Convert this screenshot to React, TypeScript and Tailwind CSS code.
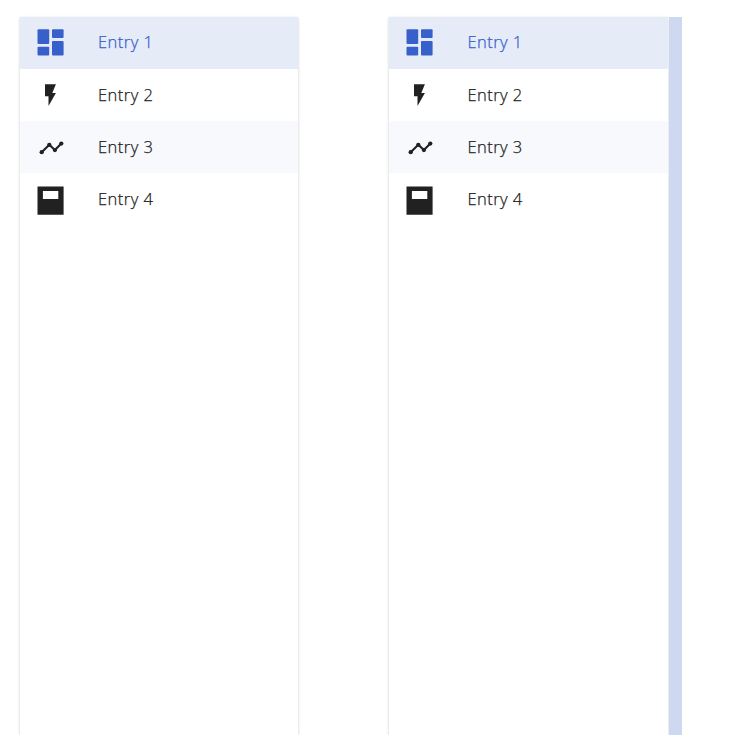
import React from "react";

type Entry = { label: string; icon: React.ReactNode; row: string; text: string };

const entries: Entry[] = [
  {
    label: "Entry 1",
    row: "bg-[#e5ebf7] text-[#3860cb]",
    text: "pb-[2px]",
    icon: (
      <>
        <rect x="17.5" y="12.2" width="11.7" height="14.7" rx="1" />
        <rect x="32" y="12.2" width="11.6" height="8.8" rx="1" />
        <rect x="17.5" y="29.8" width="11.7" height="8.8" rx="1" />
        <rect x="32" y="23.9" width="11.6" height="14.7" rx="1" />
      </>
    ),
  },
  {
    label: "Entry 2",
    row: "text-[#212121]",
    text: "pb-0",
    icon: <path d="M25 15.2H35.9L32.3 24H35.9L28.5 37V27.3H25Z" />,
  },
  {
    label: "Entry 3",
    row: "bg-[#f8f9fd] text-[#212121]",
    text: "pb-0",
    icon: (
      <>
        <path d="M21.7 31.2L29.3 23.8L34.9 29.1L41.3 22.6" fill="none" stroke="currentColor" strokeWidth="2.1" />
        <circle cx="21.7" cy="31.2" r="2.15" />
        <circle cx="29.3" cy="23.8" r="2.15" />
        <circle cx="34.9" cy="29.1" r="2.15" />
        <circle cx="41.3" cy="22.6" r="2.15" />
      </>
    ),
  },
  {
    label: "Entry 4",
    row: "text-[#212121]",
    text: "pb-0",
    icon: <path fillRule="evenodd" d="M17.5 13.6H43.6V41.8H17.5ZM22.9 18V26H38.3V18Z" />,
  },
];

function Drawer() {
  return (
    <nav className="h-[718px] w-[278.4px] shrink-0 bg-white shadow-[0_1px_3px_rgba(0,0,0,0.2)]">
      {entries.map((entry) => (
        <div key={entry.label} className={`flex h-[52.1px] items-center ${entry.row}`}>
          <svg className="h-[52px] w-[78px] shrink-0" viewBox="0 0 78 52" fill="currentColor">
            {entry.icon}
          </svg>
          <span className={`text-[16.5px] leading-6 font-light tracking-[0.46px] [-webkit-text-stroke:0.25px_currentColor] ${entry.text}`}>
            {entry.label}
          </span>
        </div>
      ))}
    </nav>
  );
}

export default function App() {
  return (
    <main className="flex h-[735px] w-[733px] overflow-hidden bg-white pt-[17px] pl-5 font-['Open_Sans','Noto_Sans',sans-serif]">
      <Drawer />
      <div className="ml-[91px] flex">
        <Drawer />
        <div className="ml-[0.8px] w-[13.2px] bg-[#ced9f1]" />
      </div>
    </main>
  );
}
